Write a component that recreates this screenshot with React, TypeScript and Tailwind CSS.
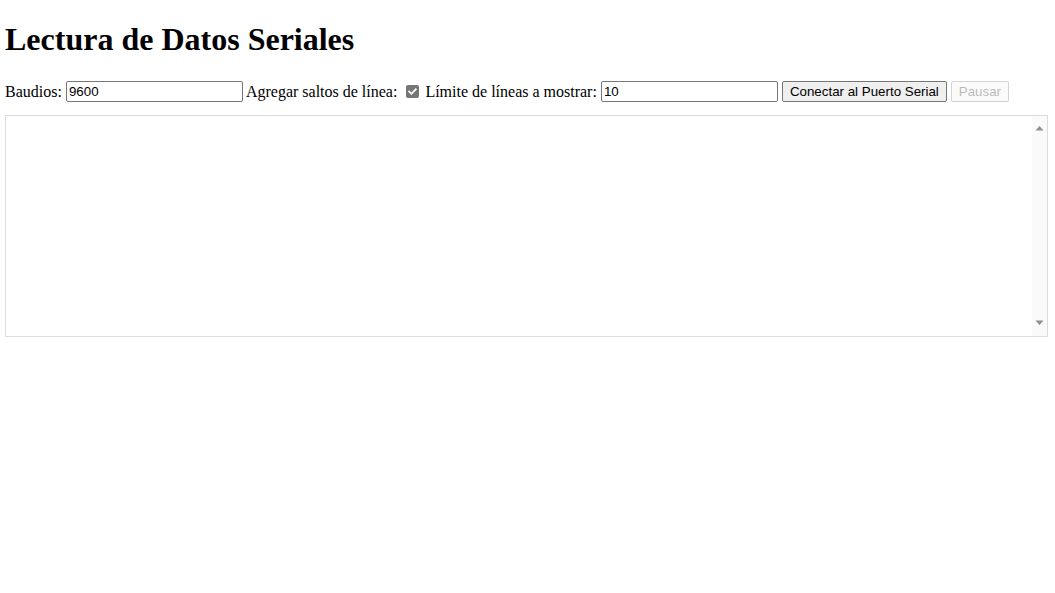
import React from "react";

export default function App() {
  return (
    <div className="min-h-screen bg-white px-[5px] font-['Liberation_Serif',serif] text-black">
      <h1 className="pt-[21px] text-[32px] font-bold leading-[37px]">Lectura de Datos Seriales</h1>
      <div className="mt-[23px] flex h-[21px] items-center text-[16px] leading-[18px]">
        <span>Baudios:</span>
        <input
          type="text"
          defaultValue="9600"
          className="ml-[4px] box-border h-[21px] w-[177px] rounded-[2px] border border-[#767676] px-[2px] font-['Liberation_Sans',Arial,sans-serif] text-[13.33px] leading-[15px] text-black outline-none"
        />
        <span className="ml-[3px]">Agregar saltos de línea:</span>
        <span className="ml-[9px] mr-[6px] flex h-[13px] w-[13px] items-center justify-center rounded-[2px] bg-[#767676]">
          <svg width="11" height="11" viewBox="0 0 11 11">
            <path d="M2.2 5.6 L4.4 7.8 L8.8 3.2" fill="none" stroke="#ffffff" strokeWidth="1.8" strokeLinecap="square" />
          </svg>
        </span>
        <span>Límite de líneas a mostrar:</span>
        <input
          type="text"
          defaultValue="10"
          className="ml-[4px] box-border h-[21px] w-[177px] rounded-[2px] border border-[#767676] px-[2px] font-['Liberation_Sans',Arial,sans-serif] text-[13.33px] leading-[15px] text-black outline-none"
        />
        <button className="ml-[4px] box-border h-[21px] w-[165px] rounded-[2px] border border-[#767676] bg-[#efefef] font-['Liberation_Sans',Arial,sans-serif] text-[13.33px] leading-[15px] text-black">
          Conectar al Puerto Serial
        </button>
        <button
          disabled
          className="ml-[4px] box-border h-[21px] w-[58px] rounded-[2px] border border-[#767676]/30 bg-[#efefef]/30 font-['Liberation_Sans',Arial,sans-serif] text-[13.33px] leading-[15px] text-[#101010]/30"
        >
          Pausar
        </button>
      </div>
      <div className="mt-[13px] box-border flex h-[222px] w-[1043px] border border-[#dcdcdc] bg-white">
        <textarea className="h-full flex-1 resize-none overflow-hidden bg-white outline-none" readOnly />
        <div className="flex w-[15px] flex-col items-center justify-between bg-[#fafafa] pt-[9px] pb-[10px]">
          <svg width="9" height="6" viewBox="0 0 9 6">
            <path d="M0.5 5.5 L4.5 1 L8.5 5.5 Z" fill="#8f8f8f" />
          </svg>
          <svg width="9" height="6" viewBox="0 0 9 6">
            <path d="M0.5 0.5 L8.5 0.5 L4.5 5 Z" fill="#8f8f8f" />
          </svg>
        </div>
      </div>
    </div>
  );
}
